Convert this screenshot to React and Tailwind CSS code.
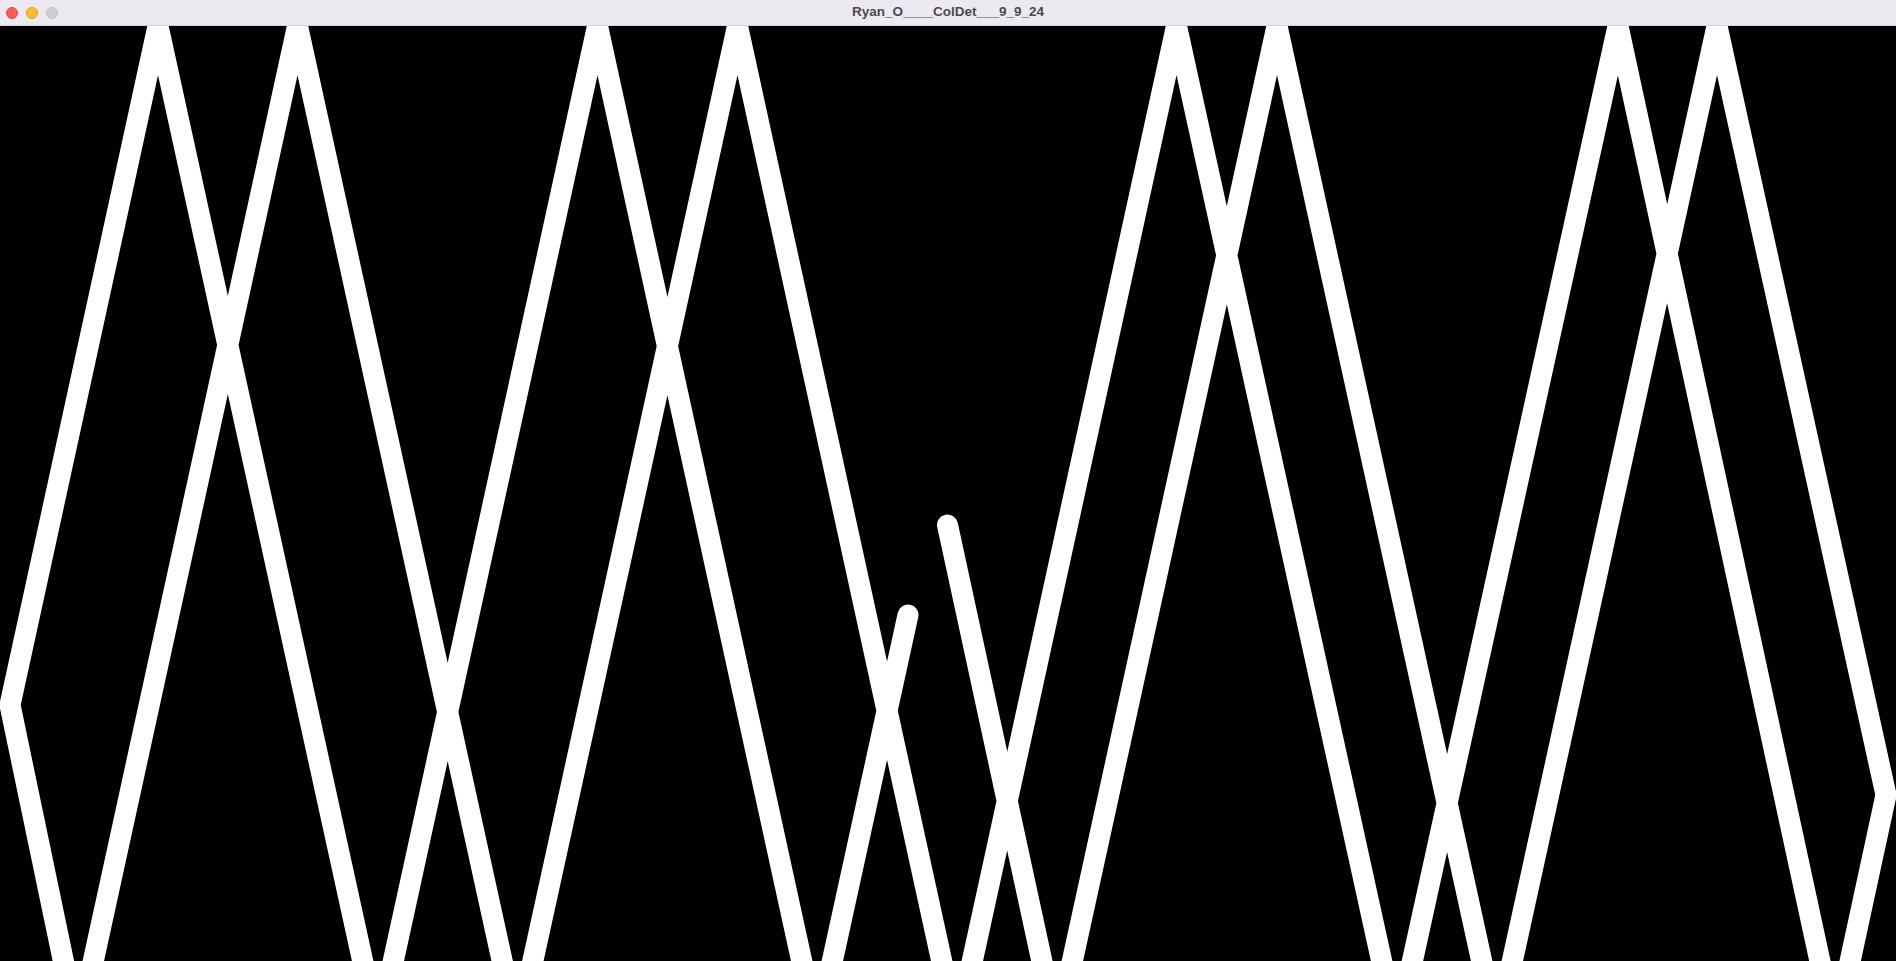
import React from 'react';

// trail of the bouncing ball, page coordinates (canvas starts at y=26)
const trail = [
  [947.5, 525],
  [1057, 1031],
  [1277, 26],
  [1497, 1031],
  [1717, 26],
  [1886, 795],
  [1835, 1031],
  [1618, 26],
  [1397, 1031],
  [1176.5, 26],
  [957, 1031],
  [737.5, 26],
  [517.5, 1031],
  [297.5, 26],
  [78, 1031],
  [10, 705],
  [158, 26],
  [378, 1031],
  [597.5, 26],
  [817, 1031],
  [908, 615],
];

const TitleBar = () => (
  <div className="relative flex h-[26px] items-center border-b border-[#d6d4da] bg-[#eceaf0]">
    <div className="flex items-center gap-[8px] pl-[6px]">
      <span className="block h-[12px] w-[12px] rounded-full border border-[#e1443c] bg-[#fe5f57]" />
      <span className="block h-[12px] w-[12px] rounded-full border border-[#e09e1e] bg-[#febc2e]" />
      <span className="block h-[12px] w-[12px] rounded-full border border-[#c2c0c5] bg-[#d1cfd4]" />
    </div>
    <div className="pointer-events-none absolute inset-0 flex items-center justify-center">
      <span className="text-[13.5px] font-bold text-[#4a4a4c] [font-family:'Liberation_Sans',Arial,sans-serif]">
        Ryan_O____ColDet___9_9_24
      </span>
    </div>
  </div>
);

export default function App() {
  const points = trail.map(([x, y]) => `${x},${y}`).join(' ');

  return (
    <div className="flex h-[961px] w-[1896px] flex-col overflow-hidden bg-black">
      <TitleBar />
      <div className="flex-1 bg-black">
        <svg
          width="1896"
          height="935"
          viewBox="0 26 1896 935"
          className="block"
        >
          <polyline
            points={points}
            fill="none"
            stroke="#ffffff"
            strokeWidth="21"
            strokeLinecap="round"
            strokeLinejoin="round"
          />
        </svg>
      </div>
    </div>
  );
}
